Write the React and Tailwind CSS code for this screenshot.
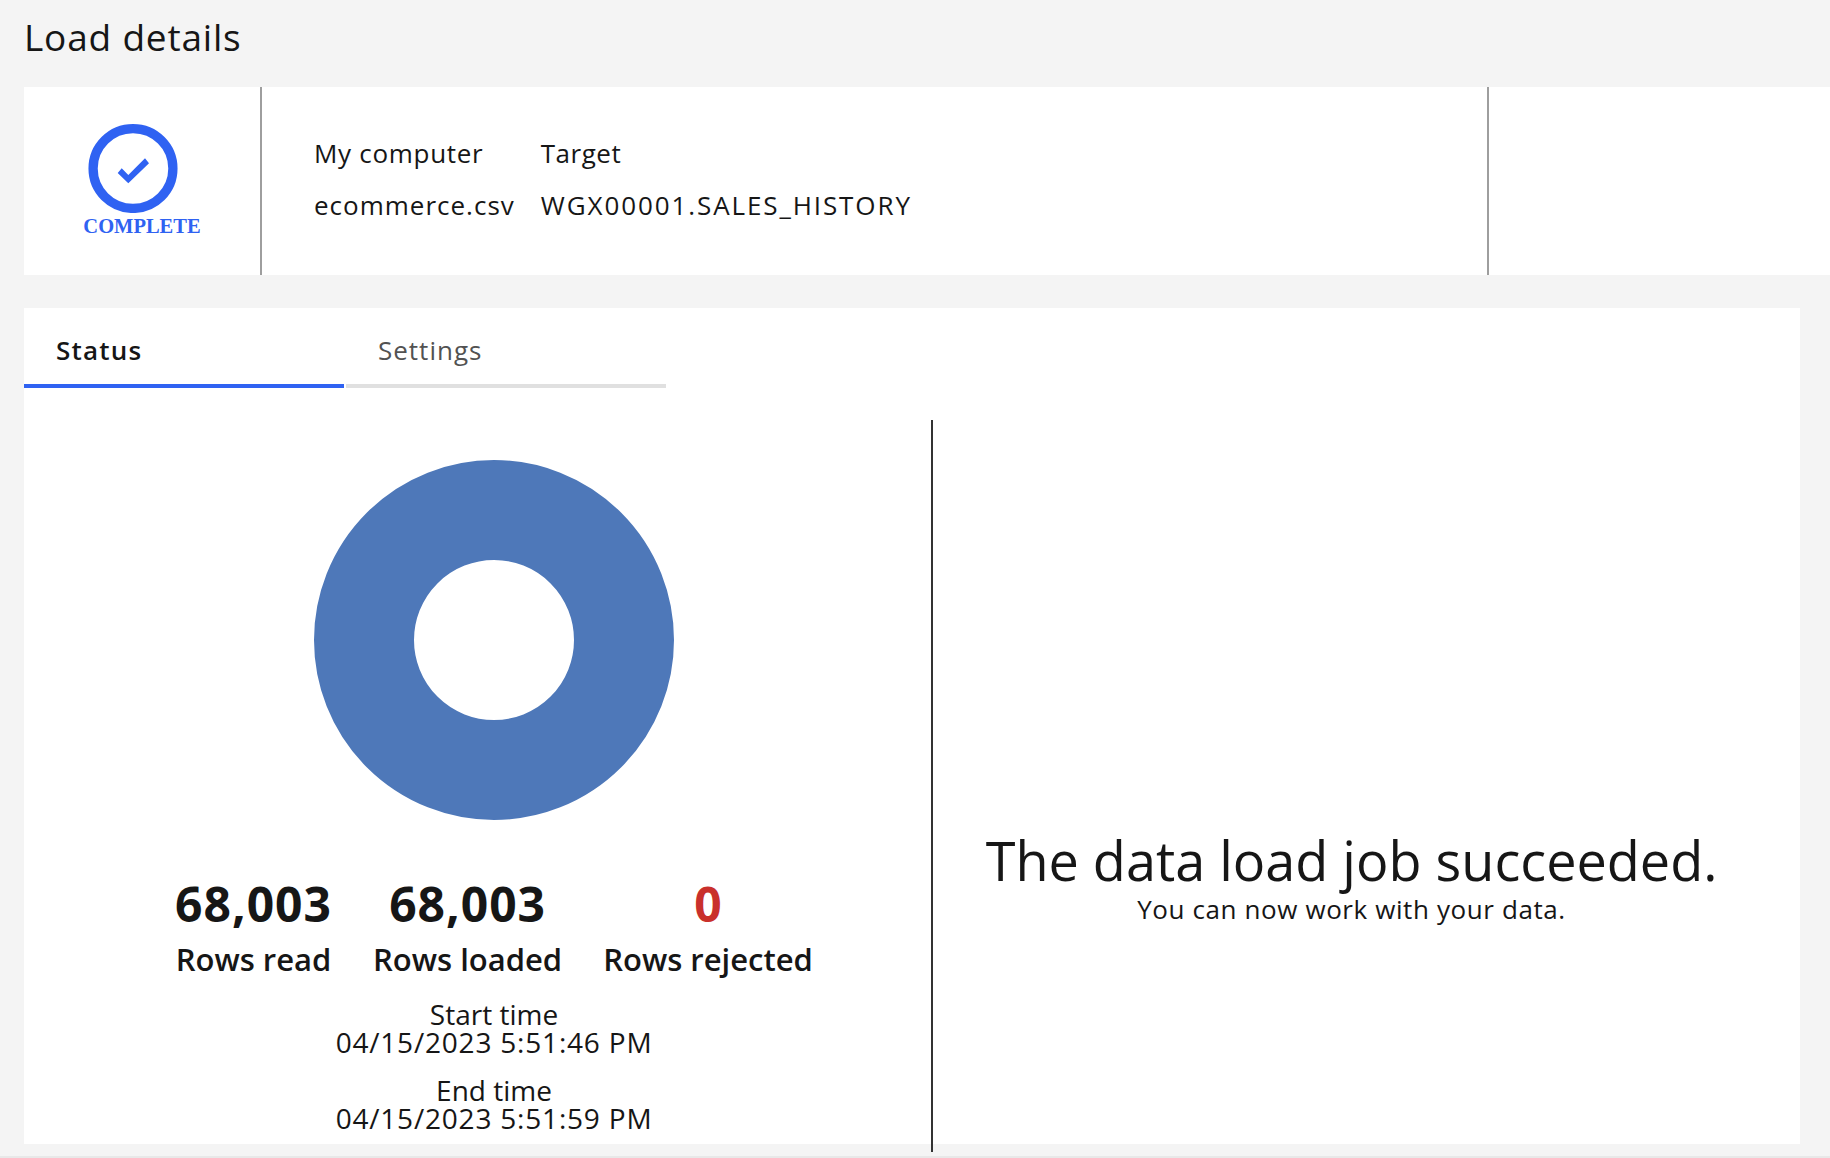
export default function App() {
  return (
    <div className="relative h-[1158px] overflow-hidden bg-[#f4f4f4] font-['Open_Sans','Liberation_Sans',sans-serif] text-[#161616] border-b-2 border-[#e8e8e8]">
      <h1 className="h-[87px] pl-[24px] pt-[14px] text-[37px] leading-[46px] font-normal tracking-[0.8px]">Load details</h1>
      <section className="ml-[24px] flex h-[188px] bg-white">
        <div className="flex w-[238px] flex-col items-center border-r-2 border-[#9e9e9e] pt-[36px]">
          <svg width="90" height="90" viewBox="0 0 90 90" className="ml-[-18px] shrink-0">
            <circle cx="45" cy="45.5" r="39.9" fill="none" stroke="#2f62f2" strokeWidth="9.3" />
            <path d="M29.7 50 L33.7 45.3 L40.3 52 L57 35.3 L61 40.3 L40.3 60.3 Z" fill="#2f62f2" />
          </svg>
          <div className="mt-[3px] font-['Liberation_Serif',serif] text-[20.5px] font-bold leading-[20px] text-[#2f62f2]">COMPLETE</div>
        </div>
        <div className="flex w-[1227px] gap-[26px] border-r-2 border-[#9e9e9e] pl-[52px] pt-[40px] text-[26px] leading-[52px]">
          <div>
            <div className="tracking-[0.7px]">My computer</div>
            <div className="tracking-[1px]">ecommerce.csv</div>
          </div>
          <div>
            <div className="tracking-[0.5px]">Target</div>
            <div className="tracking-[1.9px]">WGX00001.SALES_HISTORY</div>
          </div>
        </div>
      </section>
      <section className="ml-[24px] mt-[33px] h-[836px] w-[1776px] bg-white">
        <div className="flex h-[80px] w-[642px] gap-[2px] text-[26px]">
          <div className="h-full w-[320px] border-b-4 border-[#2f62f2] pl-[32px] pt-[22px] font-semibold leading-[40px] tracking-[1.2px]">Status</div>
          <div className="h-full w-[320px] border-b-4 border-[#e0e0e0] pl-[32px] pt-[22px] leading-[40px] tracking-[1px] text-[#525252]">Settings</div>
        </div>
        <div className="mt-[32px] flex h-[732px]">
          <div className="flex w-[907px] flex-col items-center pl-[33px] pt-[40px]">
            <svg width="360" height="360" viewBox="0 0 360 360" className="shrink-0">
              <circle cx="180" cy="180" r="130" fill="none" stroke="#4e78b9" strokeWidth="100" />
            </svg>
            <div className="mt-[56px] flex gap-[41px]">
              <div className="flex flex-col items-center">
                <div className="text-[48px] font-bold leading-[56px] tracking-[1px]">68,003</div>
                <div className="text-[31px] font-semibold leading-[54px]">Rows read</div>
              </div>
              <div className="flex flex-col items-center">
                <div className="text-[48px] font-bold leading-[56px] tracking-[1px]">68,003</div>
                <div className="text-[31px] font-semibold leading-[54px]">Rows loaded</div>
              </div>
              <div className="flex flex-col items-center">
                <div className="text-[48px] font-bold leading-[56px] text-[#c9302c]">0</div>
                <div className="text-[31px] font-semibold leading-[54px]">Rows rejected</div>
              </div>
            </div>
            <div className="mt-[14px] text-center text-[28px] leading-[28px]">
              <div>Start time</div>
              <div className="tracking-[0.8px]">04/15/2023 5:51:46 PM</div>
              <div className="mt-[20px]">End time</div>
              <div className="tracking-[0.8px]">04/15/2023 5:51:59 PM</div>
            </div>
          </div>
          <div className="flex flex-1 flex-col items-center border-l-2 border-[#333333] pr-[30px] pt-[405px]">
            <div className="text-[54px] leading-[70px]">The data load job succeeded.</div>
            <div className="text-[26px] leading-[28px] tracking-[0.6px]">You can now work with your data.</div>
          </div>
        </div>
      </section>
    </div>
  );
}
